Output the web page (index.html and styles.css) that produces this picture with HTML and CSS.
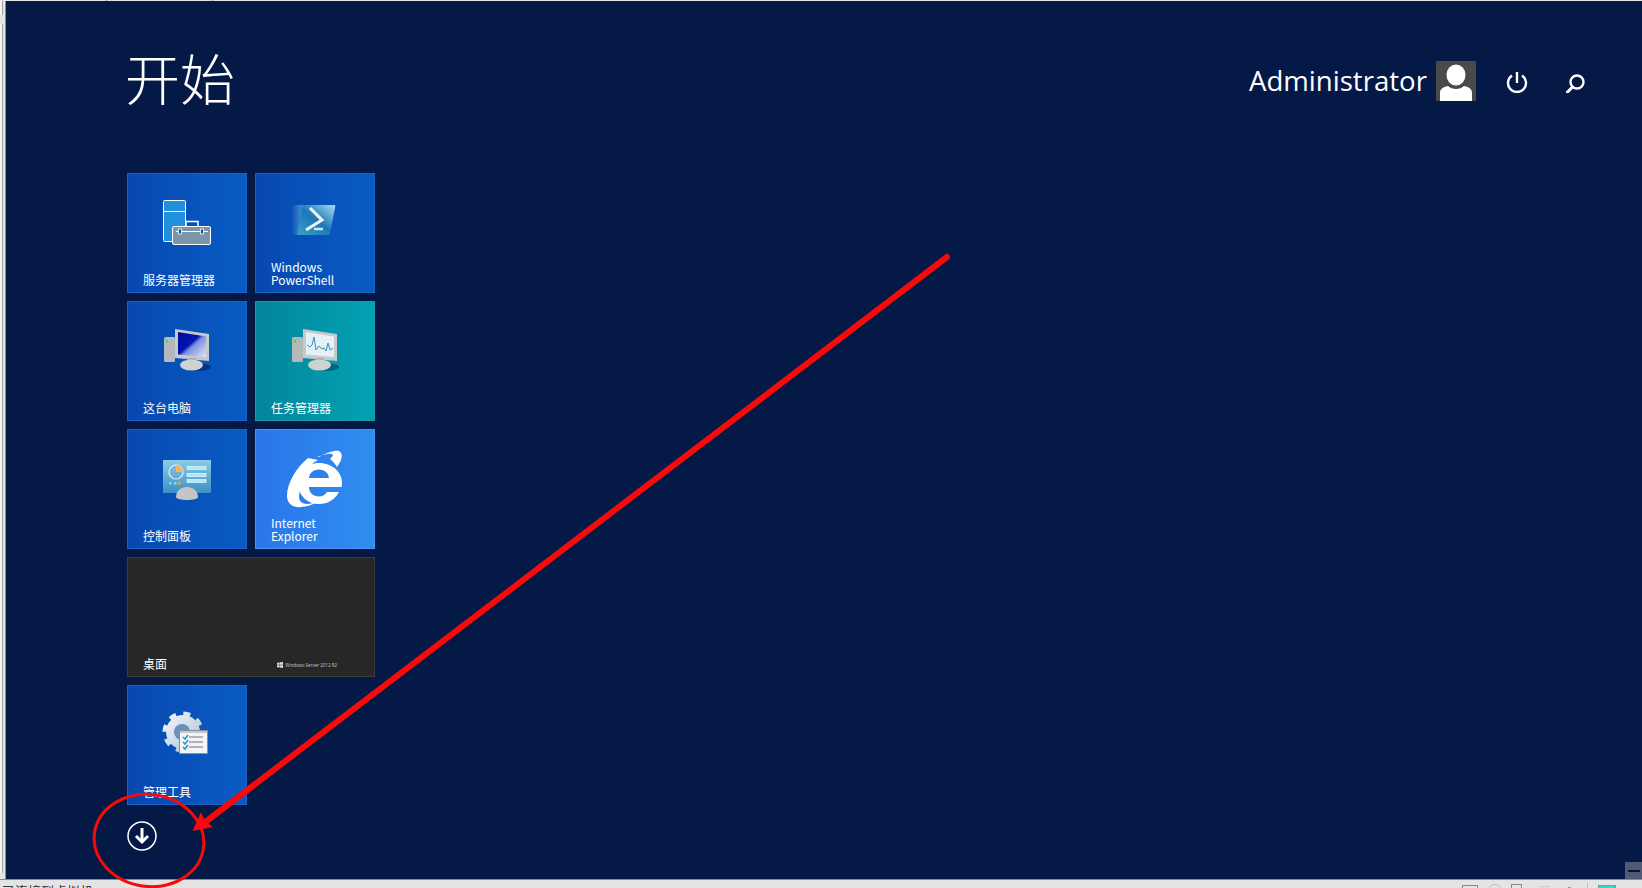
FILE: index.html
```html
<!DOCTYPE html>
<html lang="zh">
<head>
  <meta charset="UTF-8" />
  <title>开始</title>
  <link rel="stylesheet" href="styles.css">
</head>
<body>
  <div class="topbar"></div>
  <div class="middle">
    <div class="sidebar">
      <div class="side-box side-box-top"></div>
      <div class="side-box side-box-main"></div>
    </div>
    <main class="start">
      <header class="start-head">
        <h1>开始</h1>
        <div class="user">
          <span class="user-name">Administrator</span>
          <span class="avatar">
            <svg width="40" height="40" viewBox="0 0 40 40">
              <rect width="40" height="40" fill="#4a4a4a"/>
              <ellipse cx="20" cy="14" rx="9.5" ry="10.5" fill="#fff"/>
              <path d="M4 40v-8c0-4 3-6 8-7 2 2 5 3 8 3s6-1 8-3c5 1 8 3 8 7v8z" fill="#fff"/>
            </svg>
          </span>
          <svg class="head-icon" width="24" height="24" viewBox="0 0 24 24" fill="none" stroke="#fff" stroke-width="2.400">
            <path d="M7 6.500a9 9 0 1 0 10 0"/><path d="M12 3v11"/>
          </svg>
          <svg class="head-icon" width="24" height="24" viewBox="0 0 24 24" fill="none" stroke="#fff">
            <circle cx="14" cy="13" r="6.500" stroke-width="2.400"/><path d="M9.500 18L4.500 23" stroke-width="3" stroke-linecap="round"/>
          </svg>
        </div>
      </header>

      <div class="tiles">
        <div class="tile blue">
          <svg class="tile-icon" viewBox="0 0 60 60">
            <rect x="6.500" y="6.500" width="22" height="41" rx="1" fill="#2190dc" stroke="#fff"/>
            <path d="M7 17.500h21" stroke="#fff"/>
            <path d="M29 32v-4.500h12v4.500" fill="none" stroke="#fff" stroke-width="1.500"/>
            <rect x="15.500" y="32.500" width="38" height="18" rx="1.500" fill="#7c95a8" stroke="#fff"/>
            <path d="M19 37.500h32" stroke="#fff"/>
            <rect x="21.500" y="35" width="3" height="5" fill="#0a55c0" stroke="#fff" stroke-width=".8"/>
            <rect x="43.500" y="35" width="3" height="5" fill="#0a55c0" stroke="#fff" stroke-width=".8"/>
          </svg>
          <span class="tile-label">服务器管理器</span>
        </div>

        <div class="tile blue">
          <svg class="tile-icon" viewBox="0 0 60 60">
            <defs>
              <linearGradient id="psFill" x1="0" y1="1" x2="1" y2="0">
                <stop offset="0" stop-color="#3aa0cc"/>
                <stop offset=".5" stop-color="#1c78b8"/>
                <stop offset="1" stop-color="#a4dcec"/>
              </linearGradient>
              <linearGradient id="psBlur" x1="0" y1="0" x2="1" y2="0">
                <stop offset="0" stop-color="#6bb0e4" stop-opacity="0"/>
                <stop offset="1" stop-color="#6bb0e4" stop-opacity=".75"/>
              </linearGradient>
            </defs>
            <path d="M6 11h13l-7 30H6z" fill="url(#psBlur)"/>
            <path d="M17 12.500c.3-1 1-1.500 2-1.500h30c1 0 1.500.5 1.300 1.500L45 39.500c-.3 1-1 1.500-2 1.500H13.500c-1 0-1.500-.5-1.300-1.500z" fill="url(#psFill)"/>
            <path d="M25 14l12 12-16 10" fill="none" stroke="#eaf7fb" stroke-width="3"/>
            <path d="M29 35h9" stroke="#cfe7f1" stroke-width="2.500"/>
          </svg>
          <span class="tile-label">Windows<br>PowerShell</span>
        </div>

        <div class="tile blue">
          <svg class="tile-icon" viewBox="0 0 60 60">
            <defs>
              <linearGradient id="pcScreen" x1="0" y1="0" x2="1" y2="1">
                <stop offset="0" stop-color="#000c9c"/>
                <stop offset=".45" stop-color="#0414b0"/>
                <stop offset=".55" stop-color="#7f8fe0"/>
                <stop offset="1" stop-color="#dfe6fa"/>
              </linearGradient>
            </defs>
            <ellipse cx="40" cy="45" rx="14" ry="4" fill="#00286e" opacity=".7"/>
            <rect x="7" y="15" width="11" height="25" rx="1.500" fill="#b4b8bb"/>
            <rect x="9" y="18" width="2" height="2.500" fill="#3fd84a"/>
            <path d="M18 7l34 5v27l-34-3z" fill="#c6cacd"/>
            <path d="M21 10l28 4.500V35l-28-2.500z" fill="url(#pcScreen)"/>
            <path d="M30 36h9v6h-9z" fill="#a8acb0"/>
            <ellipse cx="34.500" cy="43" rx="11.500" ry="5.500" fill="#cfd1d3"/>
          </svg>
          <span class="tile-label">这台电脑</span>
        </div>

        <div class="tile teal">
          <svg class="tile-icon" viewBox="0 0 60 60">
            <ellipse cx="40" cy="45" rx="14" ry="4" fill="#04506a" opacity=".7"/>
            <rect x="7" y="15" width="11" height="25" rx="1.500" fill="#b4b8bb"/>
            <rect x="9" y="18" width="2" height="2.500" fill="#3fd84a"/>
            <path d="M18 7l34 5v27l-34-3z" fill="#c6cacd"/>
            <path d="M21 10l28 4.500V35l-28-2.500z" fill="#e4f1f6"/>
            <path d="M22 23l3 2 2-2 2-8 2 13 3-4 3 3 2-1 2 3 2-8 2 7 3-2" fill="none" stroke="#3a8fc0" stroke-width="1"/>
            <path d="M30 36h9v6h-9z" fill="#a8acb0"/>
            <ellipse cx="34.500" cy="43" rx="11.500" ry="5.500" fill="#cfd1d3"/>
          </svg>
          <span class="tile-label">任务管理器</span>
        </div>

        <div class="tile blue">
          <svg class="tile-icon" viewBox="0 0 60 60">
            <defs>
              <linearGradient id="cpFill" x1="0" y1="0" x2="0" y2="1">
                <stop offset="0" stop-color="#8ccbe8"/>
                <stop offset="1" stop-color="#3d8fc4"/>
              </linearGradient>
            </defs>
            <rect x="6" y="10" width="48" height="33" fill="url(#cpFill)"/>
            <circle cx="19" cy="22" r="7" fill="none" stroke="#e6f3fa" stroke-width="1.200"/>
            <path d="M19 15a7 7 0 0 1 7 7h-7z" fill="#f5b25b"/>
            <rect x="30" y="16.500" width="19" height="3" fill="#aee6fb" stroke="#e8f6fc" stroke-width=".7"/>
            <rect x="30" y="23.500" width="19" height="3" fill="#aee6fb" stroke="#e8f6fc" stroke-width=".7"/>
            <rect x="30" y="29.500" width="19" height="3" fill="#aee6fb" stroke="#e8f6fc" stroke-width=".7"/>
            <rect x="12" y="32" width="2.500" height="2.500" fill="#6de0f5"/>
            <rect x="17" y="32" width="2.500" height="2.500" fill="#6de0f5"/>
            <rect x="21" y="32" width="2.500" height="2.500" fill="#f5a83c"/>
            <path d="M19 47c0-6 5-10 11-10s11 4 11 10c0 2-5 3-11 3s-11-1-11-3z" fill="#c4c6c6"/>
          </svg>
          <span class="tile-label">控制面板</span>
        </div>

        <div class="tile ie">
          <svg class="tile-icon tile-icon-ie" viewBox="0 0 66 66">
            <path d="M37 13c-12 0-21 9-21 20.500S25 54 37 54c9 0 16-4.500 20-12H45c-2 3-5 4.500-8 4.500-6 0-10-4-10-9.500h32.500c.3-1.500.5-3 .5-4.500C60 22 50 13 37 13zM27 28c.5-5 4.500-8.500 10-8.500s9.500 3.500 10 8.500z" fill="#fff"/>
            <path d="M26 8C14 18 5 33 5 46c0 9 8 12 14 11 6-.5 11-2 16-5-6 2-13 3-16 0-3-3-2-9 0-15C22 27 25 15 36 10z" fill="#fff"/>
            <path d="M37 7c7-4 16-7 20-6 4 2 4 8-2 16-2-3-4-6-7-8 2-2 4-4 2-5-3-1-9 1-15 3z" fill="#fff"/>
          </svg>
          <span class="tile-label">Internet<br>Explorer</span>
        </div>

        <div class="tile tile-wide desktop">
          <span class="tile-label">桌面</span>
          <span class="edition">
            <svg width="6" height="6" viewBox="0 0 6 6"><path d="M0 .8L2.700.4v2.400H0zM3 .3L6 0v2.800H3zM0 3.200h2.700v2.400L0 5.200zM3 3.200h3V6l-3-.4z" fill="#ddd"/></svg>
            Windows Server 2012 R2
          </span>
        </div>

        <div class="tile blue">
          <svg class="tile-icon" viewBox="0 0 60 60">
            <defs>
              <linearGradient id="gearFill" x1="0" y1="0" x2="1" y2="1">
                <stop offset="0" stop-color="#f4f7fa"/>
                <stop offset="1" stop-color="#a9bfd6"/>
              </linearGradient>
            </defs>
            <circle cx="26" cy="26" r="17" fill="url(#gearFill)"/>
            <circle cx="26" cy="26" r="18.500" fill="none" stroke="url(#gearFill)" stroke-width="4" stroke-dasharray="7 7.500"/>
            <circle cx="25" cy="26" r="8" fill="#6a8fba"/>
            <rect x="22.500" y="24.500" width="28" height="23" fill="#f3f4f6" stroke="#8b8f94"/>
            <path d="M23 25h27v2H23z" fill="#c4c8cc"/>
            <path d="M32 31h14M32 36h14M32 41h14" stroke="#9d98b0" stroke-width="1.300"/>
            <path d="M26 31l2 2 3-4M26 36l2 2 3-4M26 41l2 2 3-4" fill="none" stroke="#1e9ac8" stroke-width="1.500"/>
          </svg>
          <span class="tile-label">管理工具</span>
        </div>
      </div>

      <svg class="apps-arrow" width="30" height="30" viewBox="0 0 30 30" fill="none" stroke="#fff">
        <circle cx="15" cy="15" r="14" stroke-width="1.500"/>
        <path d="M15 7v14" stroke-width="3"/>
        <path d="M9 15l6 6 6-6" stroke-width="3"/>
      </svg>

      <svg class="annotation" viewBox="0 0 1636 880">
        <ellipse cx="143" cy="839.500" rx="55" ry="46" fill="none" stroke="#f80a0a" stroke-width="3" transform="rotate(8 143 839.500)"/>
        <path d="M941 256L198 822" stroke="#f80a0a" stroke-width="6" stroke-linecap="round"/>
        <path d="M186.500 830L195 811 199 820 207 826z" fill="#f80a0a"/>
      </svg>

      <span class="corner-btn"></span>
    </main>
  </div>
  <footer class="statusbar">
    <span class="status-text">已连接到虚拟机</span>
    <span class="status-icons">
      <i class="si si-box"></i>
      <i class="si si-round"></i>
      <i class="si si-tall"></i>
      <i class="si si-small"></i>
      <i class="si si-mark"></i>
      <i class="si si-sep"></i>
      <i class="si si-green"></i>
    </span>
  </footer>
</body>
</html>
```

FILE: styles.css
```css
html, body {
  margin: 0;
  height: 100%;
  overflow: hidden;
}

body {
  display: flex;
  flex-direction: column;
  width: 1642px;
  height: 888px;
  background: #e4e4e4;
  font-family: "Noto Sans CJK SC", "Open Sans", sans-serif;
}

.topbar {
  height: 1px;
  flex: none;
  background: linear-gradient(90deg, #e4e4e4 106px, #999 106px, #999 107px, #e4e4e4 107px, #e4e4e4 212px, #999 212px, #999 213px, #e4e4e4 213px);
}

.middle {
  display: flex;
  height: 878px;
  flex: none;
}

.sidebar {
  display: flex;
  flex-direction: column;
  gap: 9px;
  width: 5px;
  flex: none;
  background: #e4e4e4;
  border-right: 1px solid #8a8a8a;
}

.side-box {
  box-sizing: border-box;
  width: 3px;
  background: #f4f4f4;
  border-right: 1px solid #a0a0a0;
}

.side-box-top {
  height: 14px;
}

.side-box-main {
  flex: 1;
  margin-bottom: 6px;
}

.start {
  position: relative;
  flex: 1;
  padding: 0 0 0 121px;
  background: #051946;
  color: #fff;
}

.start-head {
  display: flex;
  justify-content: space-between;
  align-items: center;
  height: 160px;
  padding-right: 55px;
}

.start-head h1 {
  margin: -10px 0 0 -2px;
  font-size: 55px;
  font-weight: 300;
  line-height: 80px;
}

.user {
  display: flex;
  align-items: center;
}

.user-name {
  font-family: "Open Sans", sans-serif;
  font-size: 27.6px;
  margin: -2px 9px 0 0;
}

.avatar {
  display: block;
  height: 40px;
  margin-right: 29px;
}

.avatar svg,
.head-icon {
  display: block;
}

.head-icon + .head-icon {
  margin-left: 34px;
}

.tiles {
  display: grid;
  grid-template-columns: repeat(2, 120px);
  grid-auto-rows: 120px;
  gap: 8px;
  margin-top: 12px;
}

.tile {
  position: relative;
  box-sizing: border-box;
  border: 1px solid #1c62c4;
  display: flex;
  flex-direction: column;
  align-items: center;
}

.tile-wide {
  grid-column: span 2;
}

.blue {
  background: linear-gradient(90deg, #0748b0, #085cc4);
}

.teal {
  background: linear-gradient(90deg, #03859c, #02a2b2);
  border-color: #1a9cae;
}

.ie {
  background: linear-gradient(90deg, #2a76e8, #2f8df0);
  border-color: #4c92ec;
}

.desktop {
  background: #272727;
  border-color: #3c3c3c;
}

.tile-icon {
  width: 60px;
  height: 60px;
  margin-top: 20px;
}

.tile-icon-ie {
  width: 66px;
  height: 66px;
}

.tile-label {
  position: absolute;
  left: 15px;
  bottom: 6px;
  font-size: 12px;
  line-height: 13px;
  color: #fff;
}

.edition {
  position: absolute;
  right: 37px;
  bottom: 8px;
  display: flex;
  align-items: center;
  gap: 2px;
  font-family: "Open Sans", sans-serif;
  font-size: 4.5px;
  color: #c8c8c8;
}

.apps-arrow {
  display: block;
  margin-top: 16px;
}

.annotation {
  position: absolute;
  left: 0;
  top: 0;
  width: 1636px;
  height: 880px;
  overflow: visible;
  pointer-events: none;
}

.corner-btn {
  position: absolute;
  right: 0;
  bottom: 0;
  width: 17px;
  height: 17px;
  background: linear-gradient(#121212, #121212) center / 12px 2px no-repeat #505a76;
}

.statusbar {
  display: flex;
  justify-content: space-between;
  height: 9px;
  flex: none;
  overflow: hidden;
  background: #e4e4e4;
  border-top: 1px solid #8a8a8a;
  box-sizing: border-box;
}

.status-text {
  margin-left: 2px;
  font-size: 13px;
  line-height: 21px;
  color: #333;
}

.status-icons {
  display: flex;
  align-items: flex-start;
  margin-right: 26px;
}

.si {
  display: block;
  box-sizing: border-box;
  border: 1px solid #888;
}

.si-box { width: 16px; height: 12px; margin-top: 5px; }
.si-round { width: 14px; height: 14px; margin: 4px 0 0 10px; border-radius: 50%; border-color: #bbb; }
.si-tall { width: 11px; height: 14px; margin: 4px 0 0 9px; }
.si-small { width: 9px; height: 12px; margin: 6px 0 0 18px; border-color: #ccc; }
.si-mark { width: 3px; height: 12px; margin: 7px 0 0 19px; border: 0; background: #999; }
.si-sep { width: 1px; height: 14px; margin: 3px 0 0 16px; border: 0; background: #bbb; }
.si-green { width: 18px; height: 12px; margin: 5px 0 0 10px; background: #30dcc8; border-color: #7a9a94; }
```
